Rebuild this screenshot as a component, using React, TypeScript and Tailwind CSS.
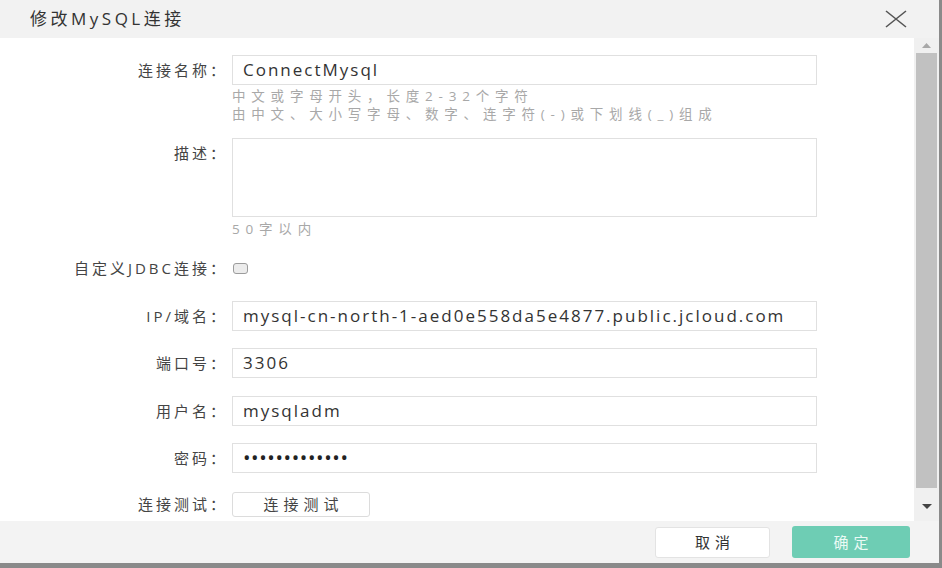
export default function App() {
  const font = "font-['Open_Sans','Noto_Sans_CJK_SC',sans-serif]";
  const label = "h-[30px] flex items-center justify-end pr-[4px] text-[15px] tracking-[3px] text-[#444] whitespace-nowrap";
  const input = "h-[30px] border border-[#e0e0e0] flex items-center pl-[10px] text-[17px] tracking-[2px] text-[#333] bg-white whitespace-nowrap";
  const hint = "text-[13.5px] leading-[18px] tracking-[5.8px] text-[#a8a8a8] whitespace-nowrap";
  return (
    <div className={`w-[942px] h-[568px] bg-white flex flex-col overflow-hidden border-b-[5px] border-r-[3px] border-[#8a8a8a] ${font}`}>
      <div className="h-[38px] shrink-0 bg-[#f2f2f2] flex items-center justify-between pl-[30px] pr-[32px]">
        <span className="text-[17px] tracking-[3.5px] text-[#333]">修改MySQL连接</span>
        <svg width="22" height="18" viewBox="0 0 22 18">
          <path d="M1 1 L21 17 M21 1 L1 17" stroke="#555" strokeWidth="1.6" fill="none" />
        </svg>
      </div>

      <div className="flex h-[483px] shrink-0">
        <div className="flex-1 flex flex-col pt-[17px]">
          <div className="grid grid-cols-[232px_585px]">
            <div className={label}>连接名称：</div>
            <div className={input}>ConnectMysql</div>
          </div>
          <div className="grid grid-cols-[232px_585px] mt-[2px]">
            <div />
            <div className="flex flex-col">
              <div className={hint}>中文或字母开头，长度2-32个字符</div>
              <div className={hint}>由中文、大小写字母、数字、连字符(-)或下划线(_)组成</div>
            </div>
          </div>
          <div className="grid grid-cols-[232px_585px] mt-[15px]">
            <div className="self-start">
              <div className={label}>描述：</div>
            </div>
            <div className="h-[79px] border border-[#e0e0e0] bg-white" />
          </div>
          <div className="grid grid-cols-[232px_585px] mt-[3px]">
            <div />
            <div className={hint}>50字以内</div>
          </div>
          <div className="grid grid-cols-[232px_585px] mt-[15px]">
            <div className={label}>自定义JDBC连接：</div>
            <div className="h-[30px] flex items-center pl-[1px]">
              <div className="w-[15px] h-[11px] rounded-[3px] border border-[#9c9c9c] bg-[#ececec]" />
            </div>
          </div>
          <div className="grid grid-cols-[232px_585px] mt-[18px]">
            <div className={label}>IP/域名：</div>
            <div className={input}>mysql-cn-north-1-aed0e558da5e4877.public.jcloud.com</div>
          </div>
          <div className="grid grid-cols-[232px_585px] mt-[17px]">
            <div className={label}>端口号：</div>
            <div className={input}>3306</div>
          </div>
          <div className="grid grid-cols-[232px_585px] mt-[18px]">
            <div className={label}>用户名：</div>
            <div className={input}>mysqladm</div>
          </div>
          <div className="grid grid-cols-[232px_585px] mt-[17px]">
            <div className={label}>密码：</div>
            <div className="h-[30px] border border-[#e0e0e0] flex items-center pl-[10px] text-[20px] tracking-[0.6px] text-[#222] bg-white whitespace-nowrap">•••••••••••••</div>
          </div>
          <div className="grid grid-cols-[232px_585px] mt-[19px]">
            <div className={`${label} !h-[25px]`}>连接测试：</div>
            <div>
              <button className="w-[138px] h-[25px] border border-[#dcdcdc] rounded-[3px] bg-white text-[15px] tracking-[5px] pl-[5px] text-[#444] flex items-center justify-center">
                连接测试
              </button>
            </div>
          </div>
        </div>

        <div className="w-[25px] bg-[#f0f0f0] flex flex-col items-center">
          <div className="h-[15px] flex items-center justify-center">
            <svg width="9" height="5" viewBox="0 0 9 5"><path d="M0 5 L4.5 0 L9 5 Z" fill="#a8a8a8" /></svg>
          </div>
          <div className="w-[21px] h-[435px] bg-[#c1c1c1]" />
          <div className="flex-1 flex items-center justify-center pt-[4px]">
            <svg width="10" height="5" viewBox="0 0 10 5"><path d="M0 0 L10 0 L5 5 Z" fill="#444" /></svg>
          </div>
        </div>
      </div>

      <div className="h-[42px] shrink-0 bg-[#f3f3f3] flex items-center justify-end gap-[22px] pr-[29px]">
        <button className="w-[115px] h-[31px] bg-white border border-[#e3e3e3] rounded-[3px] text-[15px] tracking-[5px] pl-[5px] text-[#333] flex items-center justify-center">
          取消
        </button>
        <button className="w-[118px] h-[32px] bg-[#6ecdb4] rounded-[3px] text-[15px] tracking-[5px] pl-[5px] text-[#eafaf5] flex items-center justify-center">
          确定
        </button>
      </div>
    </div>
  );
}
